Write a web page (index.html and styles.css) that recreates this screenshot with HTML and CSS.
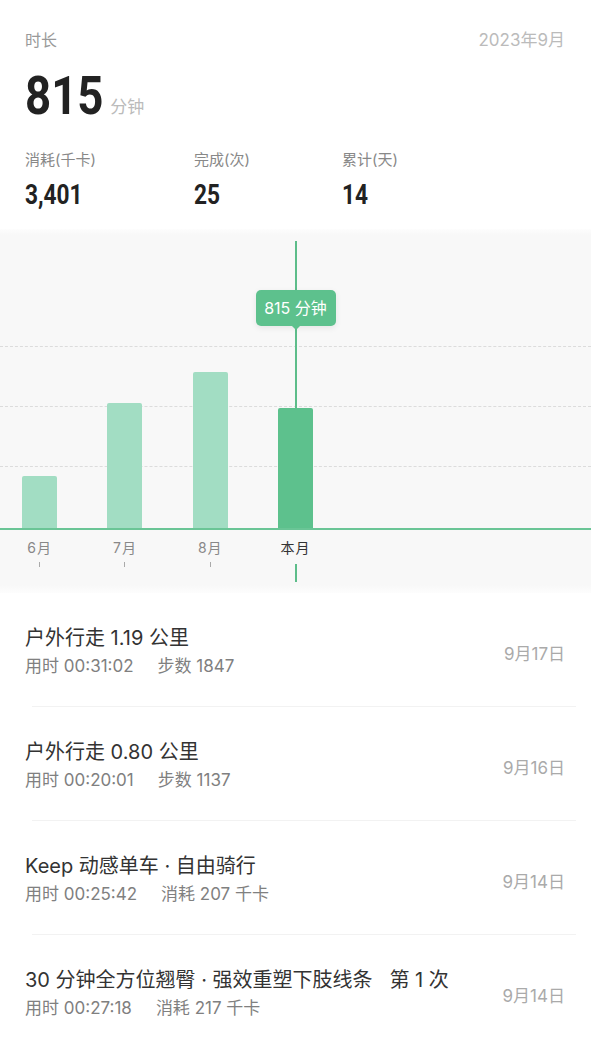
FILE: index.html
```html
<!DOCTYPE html>
<html>
<head>
    <meta charset="utf-8">
    <link rel="stylesheet" href="styles.css">
</head>
<body>
    <div class="summary">
        <div class="summary-head">
            <div class="summary-title">时长</div>
            <div class="summary-month">2023年9月</div>
        </div>

        <div class="total">
            <span class="total-number">815</span>
            <span class="total-unit">分钟</span>
        </div>

        <div class="stats">
            <div class="stat-item">
                <div class="stat-label">消耗(千卡)</div>
                <div class="stat-number">3,401</div>
            </div>
            <div class="stat-item">
                <div class="stat-label">完成(次)</div>
                <div class="stat-number">25</div>
            </div>
            <div class="stat-item">
                <div class="stat-label">累计(天)</div>
                <div class="stat-number">14</div>
            </div>
        </div>
    </div>

    <div class="chart">
        <div class="plot">
            <div class="grid-lines">
                <div class="grid-line"></div>
                <div class="grid-line"></div>
                <div class="grid-line"></div>
            </div>
            <div class="bars">
                <div class="bar-col">
                    <div class="bar" style="height: 52px"></div>
                </div>
                <div class="bar-col">
                    <div class="bar" style="height: 125px"></div>
                </div>
                <div class="bar-col">
                    <div class="bar" style="height: 156px"></div>
                </div>
                <div class="bar-col bar-col-active">
                    <div class="cursor-line cursor-top"></div>
                    <div class="tip">815 分钟</div>
                    <div class="cursor-line cursor-rest"></div>
                    <div class="bar bar-active" style="height: 120px"></div>
                </div>
            </div>
        </div>
        <div class="axis-labels">
            <div class="axis-col">
                <div class="axis-label">6月</div>
                <div class="tick"></div>
            </div>
            <div class="axis-col">
                <div class="axis-label">7月</div>
                <div class="tick"></div>
            </div>
            <div class="axis-col">
                <div class="axis-label">8月</div>
                <div class="tick"></div>
            </div>
            <div class="axis-col">
                <div class="axis-label axis-label-active">本月</div>
                <div class="tick tick-active"></div>
            </div>
        </div>
    </div>

    <div class="records">
        <div class="record">
            <div class="record-main">
                <div class="record-title">户外行走 1.19 公里</div>
                <div class="record-meta"><span>用时 00:31:02</span><span class="meta-gap">步数 1847</span></div>
            </div>
            <div class="record-date">9月17日</div>
        </div>
        <div class="divider"></div>

        <div class="record">
            <div class="record-main">
                <div class="record-title">户外行走 0.80 公里</div>
                <div class="record-meta"><span>用时 00:20:01</span><span class="meta-gap">步数 1137</span></div>
            </div>
            <div class="record-date">9月16日</div>
        </div>
        <div class="divider"></div>

        <div class="record">
            <div class="record-main">
                <div class="record-title">Keep 动感单车 · 自由骑行</div>
                <div class="record-meta"><span>用时 00:25:42</span><span class="meta-gap">消耗 207 千卡</span></div>
            </div>
            <div class="record-date">9月14日</div>
        </div>
        <div class="divider"></div>

        <div class="record">
            <div class="record-main">
                <div class="record-title">30 分钟全方位翘臀 · 强效重塑下肢线条&nbsp;&nbsp;&nbsp;第 1 次</div>
                <div class="record-meta"><span>用时 00:27:18</span><span class="meta-gap">消耗 217 千卡</span></div>
            </div>
            <div class="record-date">9月14日</div>
        </div>
    </div>
</body>
</html>
```

FILE: styles.css
```css
body {
    margin: 0;
    width: 591px;
    background: #fff;
    font-family: Inter, "Noto Sans CJK SC", sans-serif;
    color: #333;
}

/* summary */

.summary {
    padding: 28px 26px 20px 25px;
}

.summary-head {
    display: flex;
    justify-content: space-between;
    align-items: baseline;
    font-size: 16px;
    line-height: 24px;
}

.summary-title {
    color: #999;
}

.summary-month {
    font-size: 17px;
    color: #bbb;
}

.total {
    display: flex;
    align-items: baseline;
    margin-top: 14px;
    height: 60px;
}

.total-number {
    display: inline-block;
    font-family: Roboto, "Liberation Sans", sans-serif;
    font-weight: 700;
    font-size: 53px;
    line-height: 60px;
    color: #222;
    transform: scaleX(0.86);
    transform-origin: left;
    margin-right: -6px;
}

.total-unit {
    font-size: 17px;
    color: #bbb;
    position: relative;
    top: -1px;
}

.stats {
    display: grid;
    grid-template-columns: 169px 148px 1fr;
    margin-top: 23px;
}

.stat-label {
    font-size: 15px;
    line-height: 22px;
    color: #888;
}

.stat-number {
    display: inline-block;
    margin-top: 8px;
    font-family: Roboto, "Liberation Sans", sans-serif;
    font-weight: 700;
    font-size: 27px;
    line-height: 32px;
    color: #222;
    transform: scaleX(0.84);
    transform-origin: left;
}

/* chart */

.chart {
    background: linear-gradient(#fdfdfd, #f8f8f8 6px, #f8f8f8 356px, #fdfdfd);
    padding-top: 12px;
    height: 352px;
    margin-top: -2px;
}

.plot {
    display: grid;
    height: 287px;
    border-bottom: 2px solid #6ac596;
}

.grid-lines,
.bars {
    grid-area: 1 / 1;
}

.grid-lines {
    display: flex;
    flex-direction: column;
    gap: 59px;
    padding-top: 105px;
}

.grid-line {
    height: 0;
    border-top: 1px dashed #dcdcdc;
}

.bars,
.axis-labels {
    display: flex;
    margin-left: -3px;
}

.bar-col,
.axis-col {
    width: 85.3px;
    display: flex;
    flex-direction: column;
    align-items: center;
}

.bar-col {
    justify-content: flex-end;
}

.bar {
    width: 35px;
    background: #a2ddc3;
    border-radius: 2px 2px 0 0;
}

.bar-active {
    background: #5dc18d;
}

.cursor-line {
    width: 2px;
    background: #5dbd8a;
}

.cursor-top {
    height: 49px;
}

.cursor-rest {
    flex: 1;
}

.tip {
    position: relative;
    width: 80px;
    height: 36px;
    line-height: 36px;
    text-align: center;
    background: #5dc18d;
    color: #fff;
    font-size: 16px;
    border-radius: 5px;
    box-shadow: 0 2px 6px rgba(0, 0, 0, 0.08);
}

.tip:after {
    content: "";
    position: absolute;
    left: 50%;
    bottom: -4px;
    margin-left: -4px;
    border-left: 4px solid transparent;
    border-right: 4px solid transparent;
    border-top: 4px solid #5dc18d;
}

.axis-label {
    margin-top: 8px;
    font-size: 14px;
    line-height: 20px;
    color: #888;
    letter-spacing: 1px;
}

.axis-label-active {
    color: #333;
}

.tick {
    width: 1px;
    height: 5px;
    margin-top: 4px;
    background: #aaa;
}

.tick-active {
    width: 2px;
    height: 18px;
    margin-top: 6px;
    background: #5dbd8a;
}

/* records */

.records {
    padding-bottom: 20px;
}

.record {
    display: flex;
    align-items: center;
    justify-content: space-between;
    padding: 33px 26px 28px 25px;
}

.record-title {
    font-size: 20px;
    line-height: 24px;
    color: #333;
}

.record-meta {
    margin-top: 4px;
    font-size: 17px;
    line-height: 24px;
    color: #808080;
}

.meta-gap {
    margin-left: 24px;
}

.record-date {
    font-size: 17px;
    color: #aaa;
}

.divider {
    height: 1px;
    margin: 0 15px 0 32px;
    background: #f2f2f2;
}
```
